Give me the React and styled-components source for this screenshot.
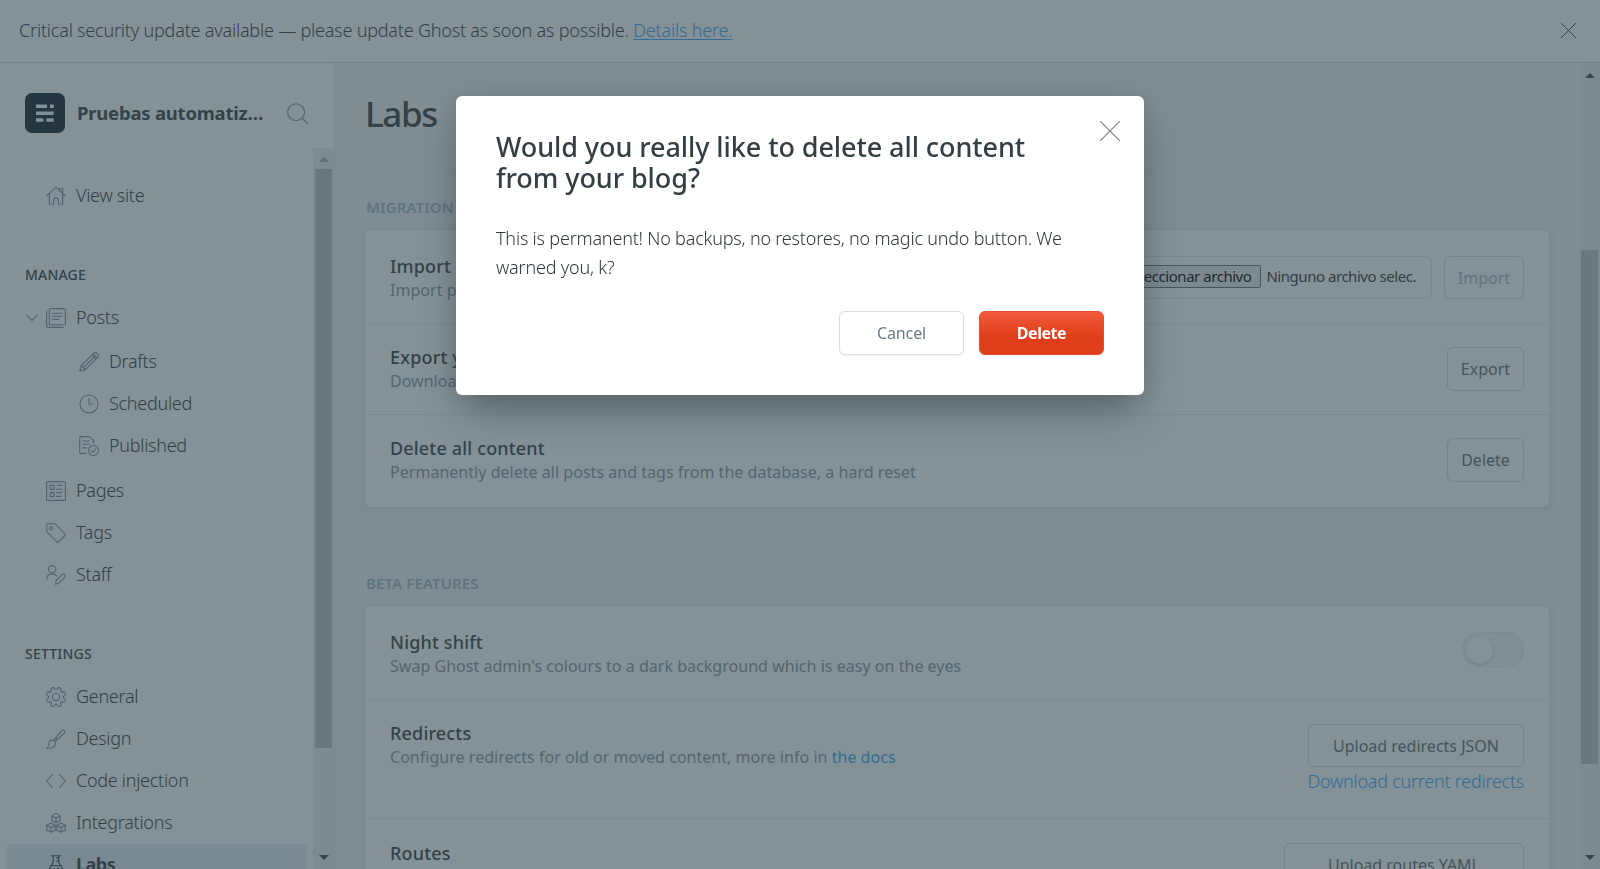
import React from "react";
import styled, { createGlobalStyle, css } from "styled-components";

const c = {
  surface: "#849197",
  canvas: "#7f8c92",
  line: "#7a8990",
  ink: "#334249",
  text: "#323f47",
  icon: "#4f646d",
  muted: "#52666f",
  faint: "#5f737d",
  link: "#326c92",
  thumb: "#6b777d",
  track: "#7f8a90",
};

const GlobalStyle = createGlobalStyle`
  *, *::before, *::after { box-sizing: border-box; }
  html, body { margin: 0; height: 100%; overflow: hidden; }
  body {
    font-family: "Noto Sans", "Open Sans", sans-serif;
    font-size: 18px;
    font-weight: 300;
    color: ${c.text};
    background: ${c.canvas};
  }
  button { font-family: inherit; font-weight: inherit; }
  h1, h2, h3, h4, p { margin: 0; }
`;

const Page = styled.div`
  display: flex;
  flex-direction: column;
  height: 869px;
  width: 1600px;
  overflow: hidden;
`;

const Banner = styled.header`
  flex: none;
  height: 63px;
  padding: 0 23px 1px 19px;
  display: flex;
  align-items: center;
  justify-content: space-between;
  background: ${c.surface};
  border-bottom: 1px solid #728086;
  font-size: 18px;
  letter-spacing: -0.2px;
`;

const BannerText = styled.span`
  padding-bottom: 1px;
`;

const BannerLink = styled.a`
  color: ${c.link};
  text-decoration: underline;
  text-underline-offset: 2px;
  text-decoration-thickness: 1px;
`;

const Body = styled.div`
  flex: 1;
  min-height: 0;
  display: flex;
`;

const Sidebar = styled.nav`
  flex: none;
  width: 335px;
  background: ${c.surface};
  border-right: 1px solid #7b888e;
  display: flex;
  flex-direction: column;
`;

const SiteHead = styled.div`
  flex: none;
  height: 85px;
  padding: 30px 26px 0 25px;
  display: flex;
  align-items: flex-start;
`;

const Logo = styled.svg`
  flex: none;
  width: 40px;
  height: 40px;
`;

const SiteName = styled.div`
  width: 188px;
  margin: 7px 22px 0 12px;
  line-height: 25px;
  font-size: 18.5px;
  font-weight: 700;
  letter-spacing: -0.22px;
  color: ${c.ink};
  white-space: nowrap;
`;

const SideScroll = styled.div`
  flex: 1;
  min-height: 0;
  display: flex;
  overflow: hidden;
`;

const NavBody = styled.div`
  width: 313px;
  padding: 27px 6px 0;
`;

const NavTitle = styled.h4`
  margin: ${(p) => p.$top}px 0 12px 19px;
  height: 20px;
  line-height: 20px;
  font-size: 14px;
  font-weight: 500;
  letter-spacing: 0.2px;
  color: ${c.ink};
`;

const NavItem = styled.div`
  height: 42px;
  display: flex;
  align-items: center;
  padding-left: ${(p) => (p.$sub ? 73 : 40)}px;
  border-radius: 6px;
  letter-spacing: -0.28px;
  white-space: nowrap;
  ${(p) => p.$arrow && css`padding-left: 20px;`}
  ${(p) =>
    p.$active &&
    css`
      background: #7b8992;
      font-weight: 700;
      letter-spacing: -0.5px;
      color: ${c.ink};
      svg { color: ${c.ink}; }
    `}
`;

const NavLabel = styled.span`
  padding-bottom: 2px;
`;

const SubList = styled.div`
  padding: 2px 0 3px;
`;

const Glyph = styled.svg.attrs({
  viewBox: "0 0 20 20",
  fill: "none",
  stroke: "currentColor",
  strokeWidth: 1.1,
  strokeLinecap: "round",
  strokeLinejoin: "round",
})`
  flex: none;
  width: ${(p) => p.$w || 20}px;
  height: ${(p) => p.$w || 20}px;
  margin-right: ${(p) => (p.$gap === undefined ? 10 : p.$gap)}px;
  color: ${(p) => p.$color || c.icon};
`;

const SearchIcon = styled(Glyph)`
  margin-top: 10px;
`;

const DialogClose = styled(Glyph)`
  margin-top: -10px;
`;

const Chevron = styled.svg`
  flex: none;
  width: 12px;
  height: 8px;
  margin-right: 8px;
  color: ${c.icon};
`;

const ScrollBar = styled.div`
  flex: none;
  width: 21px;
  display: flex;
  flex-direction: column;
  align-items: center;
  justify-content: space-between;
  background: ${c.track};
  padding: ${(p) => p.$pad};
`;

const Thumb = styled.div`
  width: 17px;
  height: ${(p) => p.$h}px;
  margin-top: ${(p) => p.$top}px;
  margin-bottom: auto;
  background: ${c.thumb};
`;

const Arrow = styled.div`
  width: 0;
  height: 0;
  border-left: 5px solid transparent;
  border-right: 5px solid transparent;
  ${(p) =>
    p.$down
      ? `border-top: 5px solid #37464d;`
      : `border-bottom: 5px solid ${p.$dim ? "#5f6c72" : "#37464d"};`}
`;

const Main = styled.main`
  flex: 1;
  min-width: 0;
  padding: 0 30px;
  background: ${c.canvas};
  overflow: hidden;
`;

const PageHead = styled.div`
  height: 106px;
  border-bottom: 1px solid ${c.line};
`;

const PageTitle = styled.h1`
  padding-top: 26px;
  line-height: 50px;
  font-size: 35px;
  font-weight: 500;
  letter-spacing: -1.4px;
  color: ${c.ink};
`;

const SectionTitle = styled.h4`
  margin: ${(p) => p.$top}px 0 13px 1px;
  height: 20px;
  line-height: 20px;
  font-size: 15px;
  font-weight: 600;
  letter-spacing: 0.1px;
  color: ${c.faint};
`;

const Card = styled.section`
  background: ${c.surface};
  border-radius: 6px;
  padding-top: 2px;
  box-shadow: 0 1px 6px rgba(95, 112, 122, 0.35);
`;

const Row = styled.div`
  height: ${(p) => p.$h}px;
  padding: ${(p) => p.$pt || 24}px 25px 0;
  display: flex;
  justify-content: space-between;
  align-items: flex-start;
  border-bottom: ${(p) => (p.$last ? 0 : 1)}px solid ${c.line};
`;

const RowTitle = styled.h3`
  line-height: 24px;
  margin-top: -2px;
  font-size: 18px;
  font-weight: 500;
  letter-spacing: 0.17px;
  color: ${c.ink};
`;

const RowText = styled.p`
  line-height: 24px;
  font-size: 16px;
  font-weight: 400;
  letter-spacing: 0.03px;
  color: ${c.muted};
`;

const InlineLink = styled.a`
  color: ${c.link};
`;

const Actions = styled.div`
  display: flex;
  gap: 12px;
`;

const Stack = styled.div`
  display: flex;
  flex-direction: column;
  align-items: flex-end;
  padding-top: ${(p) => p.$top || 0}px;
`;

const Button = styled.button`
  width: ${(p) => p.$w}px;
  height: ${(p) => p.$h || 44}px;
  padding: ${(p) => (p.$h ? 1 : 0)}px 0 0;
  border: 1px solid #728289;
  border-radius: 6px;
  background: transparent;
  font-size: 16px;
  font-weight: 400;
  letter-spacing: 0;
  color: ${(p) => (p.$dim ? c.faint : "#43555c")};
  white-space: nowrap;
`;

const FileBox = styled.div`
  width: 330px;
  height: 43px;
  padding: 0 15px 3px 0;
  display: flex;
  align-items: center;
  justify-content: flex-end;
  gap: 5px;
  border: 1px solid #748790;
  border-radius: 6px;
  font-size: 15px;
  font-weight: 400;
  letter-spacing: -0.46px;
  white-space: nowrap;
`;

const FileButton = styled.span`
  height: 23px;
  padding: 0 9px;
  line-height: 21px;
  border: 1px solid #46545b;
  border-radius: 2px;
  background: #7d898f;
  color: #1f2a30;
`;

const Toggle = styled.div`
  width: 62px;
  height: 35px;
  padding: 3px;
  border: 1px solid ${c.line};
  border-radius: 18px;
  background: #808d93;
`;

const Knob = styled.div`
  width: 27px;
  height: 27px;
  border-radius: 50%;
  background: ${c.surface};
  box-shadow: 0 0 0 1px #788990, 0 2px 2px #718188;
`;

const DownloadLink = styled.a`
  line-height: 28px;
  font-size: 18px;
  letter-spacing: -0.25px;
  color: ${c.link};
`;

const Overlay = styled.div`
  position: fixed;
  inset: 0;
  display: flex;
  justify-content: center;
  align-items: flex-start;
  padding-top: 96px;
`;

const Dialog = styled.div`
  width: 688px;
  height: 299px;
  padding: 35px 24px 0 40px;
  border-radius: 6px;
  background: #fff;
  box-shadow: 0 22px 38px -8px rgba(32, 42, 48, 0.42), 0 4px 26px rgba(45, 58, 66, 0.12);
`;

const DialogHead = styled.div`
  display: flex;
  justify-content: space-between;
`;

const DialogTitle = styled.h2`
  line-height: 31px;
  font-size: 27px;
  font-weight: 500;
  letter-spacing: -0.08px;
  color: #343f44;
  white-space: nowrap;
`;

const DialogText = styled.p`
  margin-top: 31px;
  line-height: 29px;
  font-size: 18px;
  letter-spacing: -0.2px;
  color: #2f393e;
  white-space: nowrap;
`;

const DialogFoot = styled.div`
  margin: 29px 16px 0 0;
  display: flex;
  justify-content: flex-end;
  gap: 15px;
`;

const DialogButton = styled.button`
  width: 125px;
  height: 44px;
  padding: 0;
  border-radius: 6px;
  font-size: 16px;
  font-weight: 400;
  letter-spacing: -0.1px;
  border: 1px solid #d5dfe3;
  background: #fff;
  color: #6a7d85;
  box-shadow: 0 1px 2px rgba(0, 0, 0, 0.04);
  ${(p) =>
    p.$danger &&
    css`
      border: 1px solid #e2502f;
      background: linear-gradient(#f05a3b, #e03d1a 60%, #e03d1a);
      color: #fff;
      font-weight: 700;
      letter-spacing: -0.45px;
    `}
`;

const cube = (x, y) => (
  <path
    key={x + "-" + y}
    d={`M${x} ${y - 4.6}l4.3 2.2v4.6l-4.3 2.3-4.3-2.3v-4.6zM${x - 4.3} ${y - 2.4}l4.3 2.1 4.3-2.1M${x} ${y - 0.3}v4.8`}
  />
);

// Eight teeth, offset so that a notch sits at the top.
const gearPath = (() => {
  const at = (deg, r) => {
    const a = ((deg - 90) * Math.PI) / 180;
    return `${(10 + r * Math.cos(a)).toFixed(2)} ${(10 + r * Math.sin(a)).toFixed(2)}`;
  };
  let d = "";
  for (let i = 0; i < 8; i++) {
    const m = 22.5 + i * 45;
    d += `${i ? "L" : "M"}${at(m - 10, 9.8)}Q${at(m, 10.4)} ${at(m + 10, 9.8)}L${at(m + 13, 8.4)}Q${at(m + 22.5, 6.4)} ${at(m + 32, 8.4)}`;
  }
  return d + "Z";
})();

const art = {
  home: <path d="M.7 10 10 1.2 19.3 10M3.4 9v9.3h4.2v-4.6a1.6 1.6 0 0 1 1.6-1.6h1.6a1.6 1.6 0 0 1 1.6 1.6v4.6h4.2V9M13 3.6V2.9h3.6V7" />,
  posts: <><rect x="3.3" y=".6" width="16.1" height="16.1" rx="1" /><path d="M.6 3v15.1c0 .8.5 1.3 1.3 1.3H17M6.7 5.2h9.2M6.7 8.3h9.2M6.7 11.4h6" /></>,
  draft: <path d="M.7 19.3l1.6-5.8L14.8 1.3a2.3 2.3 0 0 1 3.3 0l.6.6a2.3 2.3 0 0 1 0 3.3L6.4 17.6zM2.3 13.5l4.1 4.1M12.8 3.2l4 4M14 2l4 4M4.6 15.5 15 5.2" />,
  clock: <><circle cx="10" cy="10" r="9" /><path d="M10 4.3V10h4" /></>,
  published: <><path d="M6.5 17.4H1.9A1.2 1.2 0 0 1 .7 16.2V1.8A1.2 1.2 0 0 1 1.9.6h8.7l4 4V7M3.8 5h6.5M3.8 8.2h6.5M3.8 11.9h3.5" /><circle cx="14.5" cy="14.5" r="5" /><path d="m12.3 14.6 1.6 1.6 2.7-3.3" /></>,
  pages: <><rect x=".6" y=".6" width="18.8" height="18.8" rx="1" /><rect x="4.2" y="4.4" width="4" height="4" /><rect x="4.2" y="11.6" width="4" height="4" /><path d="M11.5 4.4h4.3M10.5 8.2h5.3M10.5 11.6h5.3M10.5 15.4h4" /></>,
  tag: <><path d="M.7 1.9A1.2 1.2 0 0 1 1.9.7h6.3c.5 0 .9.2 1.2.5l9.3 9.5c.7.7.7 1.4 0 2.1l-5.9 5.9c-.7.7-1.4.7-2.1 0L1.2 9.4C.9 9.1.7 8.7.7 8.2z" /><circle cx="5.3" cy="5.3" r="1.5" /></>,
  staff: <><circle cx="6.2" cy="4.2" r="3.6" /><path d="M.7 14.5c0-3.3 2.2-5.6 5.5-5.6 1.9 0 3.5.8 4.5 2.1M9.3 19.3l1-4.1 5.7-5.5a1.9 1.9 0 0 1 2.7 0 1.9 1.9 0 0 1 0 2.7L13 18.2z" /></>,
  gear: <><path d={gearPath} /><circle cx="10" cy="10" r="3.7" /></>,
  brush: <path d="M7.6 11.2 15.8 1.7a1.7 1.7 0 0 1 2.6 2.5L9 12.5M7.6 11.2c-3-.7-4.5 1.2-4.6 3.5C2.9 16.6 2 18 .7 19.1c3.7.5 7.6.1 8.5-3.2.4-1.4.2-2.6-.5-3.5zM7.6 11.2 9 12.5M9.8 8.8l2 1.7" />,
  code: <path d="M6.3 3.7.7 10l5.6 6.3M13.7 3.7l5.6 6.3-5.6 6.3" />,
  cubes: <>{cube(10, 5.2)}{cube(5, 14.7)}{cube(15, 14.7)}</>,
  flask: <><path d="M5.2.7h9.6M7.2.7v6.6L1.5 17c-.8 1.4 0 2.4 1.4 2.4h14.2c1.4 0 2.2-1 1.4-2.4l-5.7-9.7V.7M4.6 10.8h10.8M10.5 3h2M10.5 6h2" /><path d="M8 14h.1M12 13.5h.1M10.5 17h.1" strokeWidth="1.8" /></>,
};

const Item = ({ icon, label, ...rest }) => (
  <NavItem {...rest}>
    {rest.$arrow && (
      <Chevron viewBox="0 0 12 8" fill="none" stroke="currentColor" strokeWidth="1.1" strokeLinecap="round">
        <path d="M.8 1.2 6 6.5l5.2-5.3" />
      </Chevron>
    )}
    <Glyph>{art[icon]}</Glyph>
    <NavLabel>{label}</NavLabel>
  </NavItem>
);

export default function App() {
  return (
    <>
      <GlobalStyle />
      <Page>
        <Banner>
          <BannerText>
            Critical security update available — please update Ghost as soon as possible.{" "}
            <BannerLink>Details here.</BannerLink>
          </BannerText>
          <Glyph $w={17} $gap={0} $color={c.ink} aria-label="Close">
            <path d="M1.5 1.5l17 17M18.5 1.5l-17 17" />
          </Glyph>
        </Banner>
        <Body>
          <Sidebar>
            <SiteHead>
              <Logo viewBox="0 0 40 40">
                <rect width="40" height="40" rx="7" fill="#24363f" />
                <g fill={c.surface}>
                  <rect x="11" y="11.5" width="11" height="3.5" rx=".6" />
                  <rect x="25" y="11.5" width="3.7" height="3.5" rx=".6" />
                  <rect x="11" y="18.5" width="17.7" height="3.5" rx=".6" />
                  <rect x="11" y="25.3" width="7.5" height="3.5" rx=".6" />
                  <rect x="21.5" y="25.3" width="7.2" height="3.5" rx=".6" />
                </g>
              </Logo>
              <SiteName>Pruebas automatiz…</SiteName>
              <SearchIcon $w={21} $gap={0}>
                <circle cx="8.7" cy="8.7" r="8" />
                <path d="m14.5 14.5 5 5" />
              </SearchIcon>
            </SiteHead>
            <SideScroll>
              <NavBody>
                <Item icon="home" label="View site" />
                <NavTitle $top={48}>MANAGE</NavTitle>
                <Item icon="posts" label="Posts" $arrow />
                <SubList>
                  <Item icon="draft" label="Drafts" $sub />
                  <Item icon="clock" label="Scheduled" $sub />
                  <Item icon="published" label="Published" $sub />
                </SubList>
                <Item icon="pages" label="Pages" />
                <Item icon="tag" label="Tags" />
                <Item icon="staff" label="Staff" />
                <NavTitle $top={48}>SETTINGS</NavTitle>
                <Item icon="gear" label="General" />
                <Item icon="brush" label="Design" />
                <Item icon="code" label="Code injection" />
                <Item icon="cubes" label="Integrations" />
                <Item icon="flask" label="Labs" $active />
              </NavBody>
              <ScrollBar $pad="9px 0 9px">
                <Arrow $dim />
                <Thumb $h={579} $top={7} />
                <Arrow $down />
              </ScrollBar>
            </SideScroll>
          </Sidebar>
          <Main>
            <PageHead>
              <PageTitle>Labs</PageTitle>
            </PageHead>
            <SectionTitle $top={28}>MIGRATION OPTIONS</SectionTitle>
            <Card>
              <Row $h={92}>
                <div>
                  <RowTitle>Import content</RowTitle>
                  <RowText>Import posts from another Ghost installation</RowText>
                </div>
                <Actions>
                  <FileBox>
                    <FileButton>Seleccionar archivo</FileButton>
                    <span>Ninguno archivo selec.</span>
                  </FileBox>
                  <Button $w={80} $h={43} $dim>Import</Button>
                </Actions>
              </Row>
              <Row $h={91} $pt={23}>
                <div>
                  <RowTitle>Export your content</RowTitle>
                  <RowText>Download all of your posts and settings</RowText>
                </div>
                <Button $w={77}>Export</Button>
              </Row>
              <Row $h={92} $pt={23} $last>
                <div>
                  <RowTitle>Delete all content</RowTitle>
                  <RowText>Permanently delete all posts and tags from the database, a hard reset</RowText>
                </div>
                <Button $w={77}>Delete</Button>
              </Row>
            </Card>
            <SectionTitle $top={66}>BETA FEATURES</SectionTitle>
            <Card>
              <Row $h={92}>
                <div>
                  <RowTitle>Night shift</RowTitle>
                  <RowText>Swap Ghost admin's colours to a dark background which is easy on the eyes</RowText>
                </div>
                <Toggle>
                  <Knob />
                </Toggle>
              </Row>
              <Row $h={119} $pt={23}>
                <div>
                  <RowTitle>Redirects</RowTitle>
                  <RowText>
                    Configure redirects for old or moved content, more info in <InlineLink>the docs</InlineLink>
                  </RowText>
                </div>
                <Stack $top={1}>
                  <Button $w={216} $h={43}>Upload redirects JSON</Button>
                  <DownloadLink>Download current redirects</DownloadLink>
                </Stack>
              </Row>
              <Row $h={119} $last>
                <div>
                  <RowTitle>Routes</RowTitle>
                </div>
                <Stack>
                  <Button $w={240} $h={43}>Upload routes YAML</Button>
                </Stack>
              </Row>
            </Card>
          </Main>
          <ScrollBar $pad="10px 0 9px">
            <Arrow />
            <Thumb $h={514} $top={172} />
            <Arrow $down />
          </ScrollBar>
        </Body>
      </Page>
      <Overlay>
        <Dialog role="dialog">
          <DialogHead>
            <DialogTitle>
              Would you really like to delete all content
              <br />
              from your blog?
            </DialogTitle>
            <DialogClose $w={20} $gap={0} $color="#7d7d7d" aria-label="Close">
              <path d="M.3.3l19.4 19.4M19.7.3L.3 19.7" />
            </DialogClose>
          </DialogHead>
          <DialogText>
            This is permanent! No backups, no restores, no magic undo button. We
            <br />
            warned you, k?
          </DialogText>
          <DialogFoot>
            <DialogButton>Cancel</DialogButton>
            <DialogButton $danger>Delete</DialogButton>
          </DialogFoot>
        </Dialog>
      </Overlay>
    </>
  );
}
